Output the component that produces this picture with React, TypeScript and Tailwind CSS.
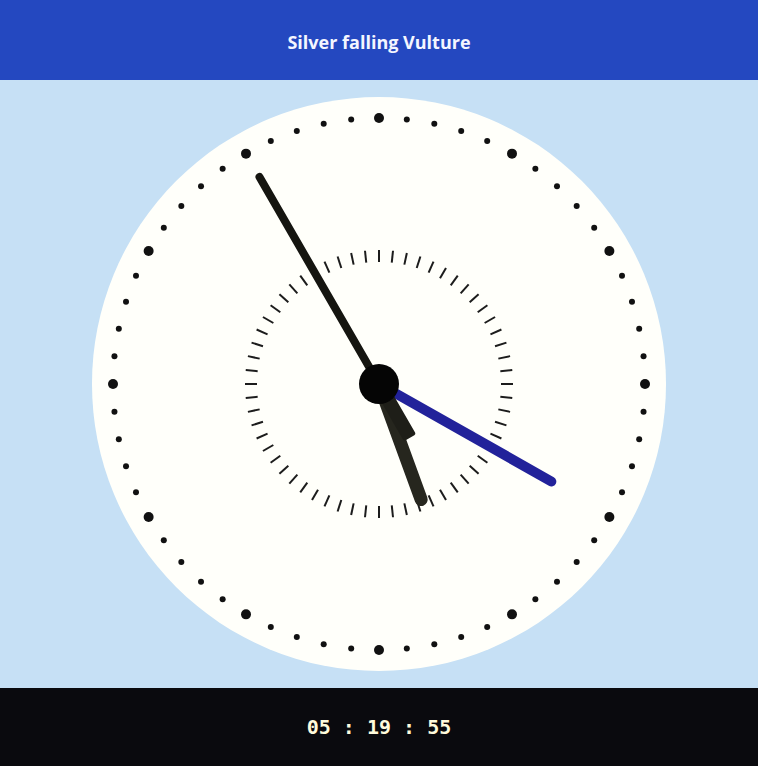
import React from 'react'

const SIZE = 574
const C = SIZE / 2

export default function App() {
  const hours = 5
  const minutes = 19
  const seconds = 55

  const hourAngle = (hours % 12) * 30 + minutes * 0.5 + seconds / 120
  const minuteAngle = minutes * 6 + seconds * 0.1
  const secondAngle = seconds * 6

  const pad = (n: number) => String(n).padStart(2, '0')

  return (
    <div className="flex h-[766px] w-full flex-col bg-[#c6e0f5]">
      {/* Header */}
      <header className="flex h-20 items-center justify-center bg-[#2448c0] pt-1">
        <h1 className="font-['Open_Sans',sans-serif] text-[18px] font-bold text-[#f4f6ff]">
          Silver falling Vulture
        </h1>
      </header>

      {/* Clock */}
      <main className="flex flex-1 items-center justify-center">
        <svg width={SIZE} height={SIZE} viewBox={`0 0 ${SIZE} ${SIZE}`}>
          <circle cx={C} cy={C} r={C} fill="#fffffa" />

          {/* outer dots */}
          {Array.from({ length: 60 }).map((_, i) => {
            const a = (i * 6 * Math.PI) / 180
            const big = i % 5 === 0
            return (
              <circle
                key={i}
                cx={C + 266 * Math.sin(a)}
                cy={C - 266 * Math.cos(a)}
                r={big ? 5 : 3}
                fill="#111"
              />
            )
          })}

          {/* inner ticks */}
          {Array.from({ length: 60 }).map((_, i) => (
            <line
              key={i}
              x1={C}
              y1={C - 122}
              x2={C}
              y2={C - 134}
              stroke="#1c1c1c"
              strokeWidth={2}
              transform={`rotate(${i * 6} ${C} ${C})`}
            />
          ))}

          {/* hour hand */}
          <line
            x1={C}
            y1={C}
            x2={C}
            y2={C - 123}
            stroke="#26261e"
            strokeWidth={13}
            strokeLinecap="round"
            transform={`rotate(${hourAngle} ${C} ${C})`}
          />

          {/* minute hand */}
          <line
            x1={C}
            y1={C}
            x2={C}
            y2={C - 198}
            stroke="#22229a"
            strokeWidth={10}
            strokeLinecap="round"
            transform={`rotate(${minuteAngle} ${C} ${C})`}
          />

          {/* second hand with tail */}
          <g transform={`rotate(${secondAngle} ${C} ${C})`}>
            <line x1={C} y1={C} x2={C} y2={C - 239} stroke="#151510" strokeWidth={8} strokeLinecap="round" />
            <rect x={C - 7} y={C} width={14} height={62} rx={2} fill="#1e1e18" />
          </g>

          <circle cx={C} cy={C} r={20} fill="#050505" />
        </svg>
      </main>

      {/* Digital readout */}
      <footer className="flex h-[78px] items-center justify-center bg-[#0a0a0e]">
        <span className="font-['DejaVu_Sans_Mono',monospace] text-[20px] font-bold text-[#fffbdc]">
          {pad(hours)} : {pad(minutes)} : {pad(seconds)}
        </span>
      </footer>
    </div>
  )
}
